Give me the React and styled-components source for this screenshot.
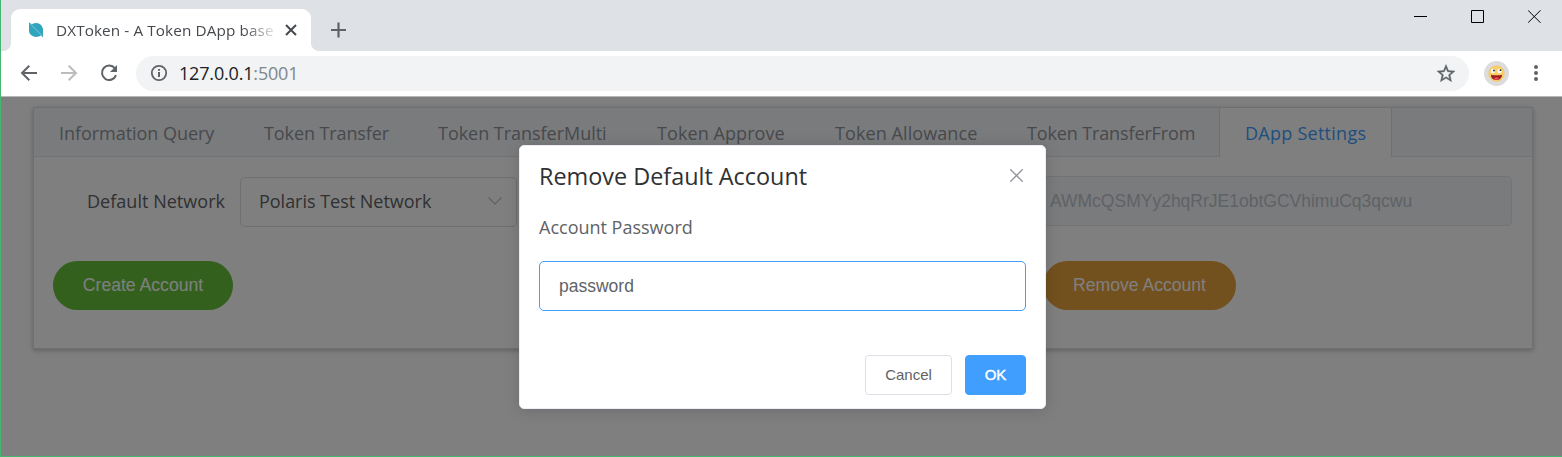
import React from "react";
import styled, { createGlobalStyle, css } from "styled-components";

const GlobalStyle = createGlobalStyle`
  * { box-sizing: border-box; }
  html, body { margin: 0; padding: 0; overflow: hidden; }
  button, input { font: inherit; margin: 0; outline: none; }
`;

const UI = `"Open Sans", "Noto Sans", sans-serif`;
const ARIAL = `"Liberation Sans", Arial, sans-serif`;

const Window = styled.div`
  width: 1562px;
  height: 457px;
  display: flex;
  flex-direction: column;
  border-left: 1px solid #43b66f;
  border-bottom: 1px solid #43b66f;
  font-family: ${UI};
  background: #fff;
`;

const TabStrip = styled.div`
  height: 51px;
  flex: none;
  display: flex;
  align-items: flex-end;
  background: #dee1e6;
  padding-left: 2px;
`;

const Corner = styled.div`
  width: 8px;
  height: 8px;
  background: radial-gradient(circle at ${(p) => (p.$right ? "100%" : "0")} 0, #dee1e6 7.6px, #fff 8.4px);
`;

const BrowserTab = styled.div`
  width: 300px;
  height: 42px;
  display: flex;
  align-items: center;
  background: #fff;
  border-radius: 9px 9px 0 0;
  padding: 0 14px 0 17px;
`;

const TabTitle = styled.div`
  width: 220px;
  margin-left: 12px;
  white-space: nowrap;
  font-size: 15.3px;
  line-height: 22px;
  letter-spacing: 0.1px;
  color: #45484d;
  mask-image: linear-gradient(90deg, #000 188px, transparent 223px);
`;

const TabClose = styled.div`
  display: flex;
  margin-left: auto;
  padding-bottom: 1px;
`;

const NewTab = styled.div`
  height: 42px;
  display: flex;
  align-items: center;
  margin-left: 12px;
`;

const WindowControls = styled.div`
  align-self: flex-start;
  display: flex;
  gap: 43px;
  margin: 10px 20px 0 auto;
`;

const Toolbar = styled.div`
  height: 46px;
  flex: none;
  display: flex;
  align-items: center;
  padding: 0 17px 1px 18px;
  border-bottom: 1px solid #b6b8ba;
`;

const NavButtons = styled.div`
  display: flex;
  gap: 20px;
  width: 117px;
`;

const Omnibox = styled.div`
  width: 1333px;
  height: 35px;
  display: flex;
  align-items: center;
  border-radius: 18px;
  background: #f1f3f4;
  padding: 0 13px 0 14px;
`;

const Url = styled.div`
  flex: 1;
  margin-left: 11px;
  font-size: 18px;
  line-height: 26px;
  padding-bottom: 1px;
  letter-spacing: -0.18px;
  color: #202124;
`;

const Port = styled.span`
  color: #80868b;
`;

const Avatar = styled.div`
  display: flex;
  margin-left: 15px;
`;

const MenuDots = styled.div`
  display: flex;
  margin-left: auto;
`;

const Page = styled.div`
  position: relative;
  flex: 1;
  padding: 10px 28px 0 32px;
  background: #fff;
`;

const Card = styled.div`
  width: 1500px;
  height: 242px;
  border: 1px solid #dcdfe6;
  box-shadow: 0 2px 5px 0 rgba(0, 0, 0, 0.2), 0 0 6px 0 rgba(0, 0, 0, 0.06);
`;

const Tabs = styled.div`
  display: flex;
  height: 49px;
  background: #f5f7fa;
  border-bottom: 1px solid #e0e4ec;
`;

const Tab = styled.div`
  width: ${(p) => p.$w}px;
  height: 49px;
  padding-left: 25px;
  white-space: nowrap;
  font-size: 18px;
  line-height: 50px;
  letter-spacing: ${(p) => p.$ls}px;
  color: #909399;
  ${(p) =>
    p.$active &&
    css`
      color: #409eff;
      background: #fff;
      border-left: 1px solid #dcdfe6;
      border-right: 1px solid #dcdfe6;
    `}
`;

const SettingsRow = styled.div`
  display: flex;
  align-items: flex-start;
  justify-content: space-between;
  padding: 19px 20px 0 53px;
`;

const Field = styled.div`
  display: flex;
  align-items: center;
  margin-top: 1px;
`;

const FieldLabel = styled.label`
  width: 153px;
  padding-bottom: 2px;
  font-size: 18px;
  letter-spacing: 0.03px;
  white-space: nowrap;
  color: #606266;
`;

const Select = styled.div`
  width: 277px;
  height: 50px;
  display: flex;
  align-items: center;
  justify-content: space-between;
  border: 1px solid #dcdfe6;
  border-radius: 5px;
  padding: 0 13px 2px 18px;
  font-size: 18px;
  letter-spacing: -0.02px;
  color: #606266;
`;

const AddressInput = styled.input`
  width: 482px;
  height: 50px;
  border: 1px solid #e4e7ed;
  border-radius: 5px;
  background: #f5f7fa;
  padding: 1px 0 0 19px;
  font-family: ${ARIAL};
  font-size: 17.5px;
  color: #c0c4cc;
`;

const ActionRow = styled.div`
  display: flex;
  gap: 810px;
  padding: 34px 0 0 19px;
`;

const PillButton = styled.button`
  width: ${(p) => p.$w}px;
  height: 49px;
  border: 0;
  border-radius: 25px;
  background: ${(p) => p.$bg};
  color: #fff;
  font-family: ${ARIAL};
  font-size: 17.6px;
  padding: 0;
  white-space: nowrap;
`;

const Overlay = styled.div`
  position: absolute;
  inset: 0;
  display: flex;
  align-items: flex-start;
  padding: 48px 0 0 518px;
  background: rgba(0, 0, 0, 0.5);
`;

const Dialog = styled.div`
  width: 527px;
  height: 264px;
  display: flex;
  flex-direction: column;
  background: #fff;
  border: 1px solid #ebeef5;
  border-radius: 5px;
  box-shadow: 0 2px 15px 0 rgba(0, 0, 0, 0.15);
  padding: 0 19px 13px;
`;

const DialogHeader = styled.div`
  height: 61px;
  display: flex;
  align-items: center;
  justify-content: space-between;
  padding: 0 2px 2px 0;
`;

const DialogTitle = styled.div`
  font-size: 23.4px;
  line-height: 32px;
  letter-spacing: 0;
  white-space: nowrap;
  color: #303133;
`;

const DialogMessage = styled.div`
  height: 54px;
  line-height: 41px;
  font-size: 18px;
  letter-spacing: 0;
  color: #606266;
`;

const PasswordInput = styled.input`
  width: 487px;
  height: 50px;
  border: 1px solid #409eff;
  border-radius: 5px;
  padding: 0 19px;
  background: #fff;
  font-family: ${ARIAL};
  font-size: 17.5px;
  color: #606266;
`;

const DialogFooter = styled.div`
  display: flex;
  justify-content: flex-end;
  gap: 13px;
  margin-top: auto;
`;

const DialogButton = styled.button`
  width: ${(p) => p.$w}px;
  height: 40px;
  padding: 0 0 2px;
  border: 1px solid ${(p) => (p.$primary ? "#409eff" : "#dcdfe6")};
  border-radius: 4px;
  background: ${(p) => (p.$primary ? "#409eff" : "#fff")};
  color: ${(p) => (p.$primary ? "#fff" : "#606266")};
  font-family: ${ARIAL};
  font-size: 15px;
  -webkit-text-stroke: ${(p) => (p.$primary ? "0.4px #fff" : "0")};
`;

const tabs = [
  { label: "Information Query", w: 205, ls: -0.04 },
  { label: "Token Transfer", w: 174, ls: -0.1 },
  { label: "Token TransferMulti", w: 219, ls: -0.03 },
  { label: "Token Approve", w: 178, ls: 0.08 },
  { label: "Token Allowance", w: 192, ls: 0.09 },
  { label: "Token TransferFrom", w: 217, ls: -0.13 },
  { label: "DApp Settings", w: 173, ls: 0.26, active: true },
];

const Favicon = () => (
  <svg width="16" height="16" viewBox="0 0 16 16">
    <path d="M1 .5 4 2.2C7 .4 11 .7 13.2 3.3c1.6 2 2.1 4 1.8 6.2v5.8l-2.3-1.8C9.5 15.8 5 15.300 2.500 12.500 1 10.800.8 8.800 1 7z" fill="#32a5be" />
    <path d="m2.500 2 11.500 11.600" stroke="#8ed0de" strokeWidth=".8" />
  </svg>
);

const CloseMark = ({ size, color, width }) => (
  <svg width={size} height={size} viewBox="0 0 12 12" fill="none" stroke={color} strokeWidth={width}>
    <path d="m1 1 10 10M11 1 1 11" />
  </svg>
);

const Arrow = ({ flip, color }) => (
  <svg width="20" height="20" viewBox="0 0 20 20" fill="none" stroke={color} strokeWidth="2" transform={flip ? "scale(-1 1)" : undefined}>
    <path d="M18 10H3.500M10.300 2.700 3 10l7.300 7.300" />
  </svg>
);

const Reload = () => (
  <svg width="20" height="20" viewBox="0 0 20 20">
    <path d="M15.900 5.400A7.200 7.200 0 1 0 17 12.100" fill="none" stroke="#5f6368" strokeWidth="2" />
    <path d="M18 2v7h-7z" fill="#5f6368" />
  </svg>
);

const Info = () => (
  <svg width="18" height="18" viewBox="0 0 18 18">
    <circle cx="9" cy="9" r="7.200" fill="none" stroke="#5f6368" strokeWidth="1.800" />
    <path d="M8 8h2v5H8zM8 5h2v1.800H8z" fill="#5f6368" />
  </svg>
);

const Star = () => (
  <svg width="20" height="20" viewBox="1 .4 22 22">
    <path fill="#5f6368" stroke="#5f6368" strokeWidth=".4" d="m22 9.240-7.190-.62L12 2 9.190 8.630 2 9.240l5.460 4.730L5.820 21 12 17.270 18.180 21l-1.630-7.030zM12 15.400l-3.760 2.270 1-4.280-3.320-2.880 4.380-.38L12 6.100l1.710 4.040 4.380.38-3.320 2.880 1 4.280z" />
  </svg>
);

const Face = () => (
  <svg width="25" height="25" viewBox="0 0 25 25">
    <circle cx="12.500" cy="12.500" r="12.500" fill="#dcdcdc" />
    <circle cx="12.500" cy="12.500" r="7.700" fill="#fcd065" stroke="#f1bd55" strokeWidth=".6" />
    <circle cx="9" cy="10" r="2.200" fill="#fff" />
    <circle cx="15.500" cy="10" r="2.200" fill="#fff" />
    <circle cx="10" cy="9.500" r=".9" fill="#222" />
    <circle cx="16.500" cy="9.200" r=".9" fill="#222" />
    <path d="M7 13.700q5.500 1 11 0c0 3.200-2.200 5.300-5.500 5.300S7 17 7 13.700z" fill="#9c1f1f" />
    <path d="M10 18.200q0-2 2-1.700 2-.8 3 1.300-2 1.600-5 .4z" fill="#f0505a" />
  </svg>
);

export default function App() {
  return (
    <>
      <GlobalStyle />
      <Window>
        <TabStrip>
          <Corner />
          <BrowserTab>
            <Favicon />
            <TabTitle>DXToken - A Token DApp base</TabTitle>
            <TabClose>
              <CloseMark size={12} color="#45484d" width={2} />
            </TabClose>
          </BrowserTab>
          <Corner $right />
          <NewTab>
            <svg width="16" height="16" viewBox="0 0 16 16" stroke="#5f6368" strokeWidth="2.200">
              <path d="M7.500 .5v15M0 8h15" />
            </svg>
          </NewTab>
          <WindowControls>
            <svg width="14" height="14" stroke="#000" fill="none"><path d="M0 6.500h13" /></svg>
            <svg width="14" height="14" stroke="#000" fill="none"><path d="M.5 .5h12v12H.5z" /></svg>
            <svg width="14" height="14" stroke="#000" fill="none"><path d="m0 .3 12.500 12.500M12.500 .3 0 12.800" /></svg>
          </WindowControls>
        </TabStrip>
        <Toolbar>
          <NavButtons>
            <Arrow color="#5f6368" />
            <Arrow flip color="#babcbe" />
            <Reload />
          </NavButtons>
          <Omnibox>
            <Info />
            <Url>127.0.0.1<Port>:5001</Port></Url>
            <Star />
          </Omnibox>
          <Avatar><Face /></Avatar>
          <MenuDots>
            <svg width="17" height="18" fill="#5f6368">
              <circle cx="8" cy="3" r="2" />
              <circle cx="8" cy="9" r="2" />
              <circle cx="8" cy="15" r="2" />
            </svg>
          </MenuDots>
        </Toolbar>
        <Page>
          <Card>
            <Tabs>
              {tabs.map((t) => (
                <Tab key={t.label} $w={t.w} $ls={t.ls} $active={t.active}>{t.label}</Tab>
              ))}
            </Tabs>
            <SettingsRow>
              <Field>
                <FieldLabel>Default Network</FieldLabel>
                <Select>
                  Polaris Test Network
                  <svg width="16" height="10" fill="none" stroke="#c0c4cc" strokeWidth="1.300">
                    <path d="m1.500 1.500 6.500 6.500 6.500-6.500" />
                  </svg>
                </Select>
              </Field>
              <AddressInput disabled defaultValue="AWMcQSMYy2hqRrJE1obtGCVhimuCq3qcwu" />
            </SettingsRow>
            <ActionRow>
              <PillButton $w={180} $bg="#67c23a">Create Account</PillButton>
              <PillButton $w={193} $bg="#e6a23c">Remove Account</PillButton>
            </ActionRow>
          </Card>
          <Overlay>
            <Dialog>
              <DialogHeader>
                <DialogTitle>Remove Default Account</DialogTitle>
                <CloseMark size={15} color="#909399" width={1} />
              </DialogHeader>
              <DialogMessage>Account Password</DialogMessage>
              <PasswordInput defaultValue="password" />
              <DialogFooter>
                <DialogButton $w={87}>Cancel</DialogButton>
                <DialogButton $w={61} $primary>OK</DialogButton>
              </DialogFooter>
            </Dialog>
          </Overlay>
        </Page>
      </Window>
    </>
  );
}
